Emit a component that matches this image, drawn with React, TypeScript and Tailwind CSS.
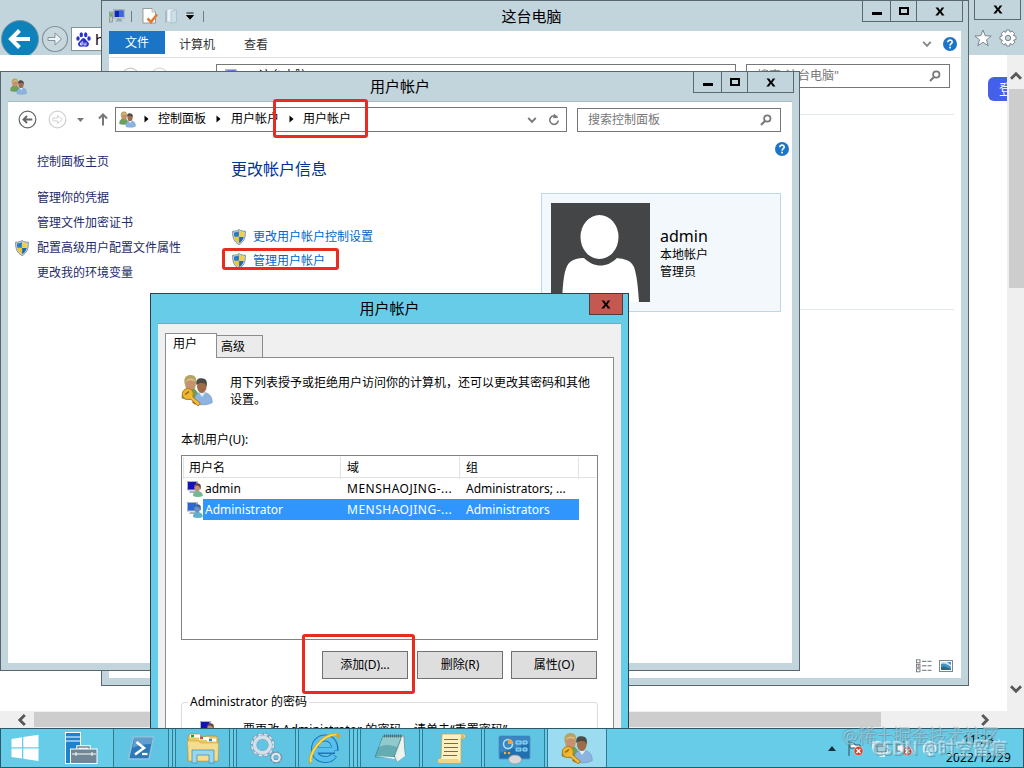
import type { ReactNode } from 'react';
import clsx from 'clsx';

function BlackX({ className = 'text-black' }: { className?: string }) {
  return (
    <svg width="10" height="9" viewBox="0 0 10 9" className={className}>
      <path d="M0.5 0.5H3.2L5 3.2L6.800 0.5H9.300L6.300 4.400L9.500 8.500H6.800L5 5.700L3 8.500H0.300L3.600 4.400Z" fill="currentColor" />
    </svg>
  );
}

function WindowControls() {
  return (
    <div className="flex h-[22px] border border-[#5b696e]">
      <div className="flex w-[28px] items-end justify-center border-r border-[#5b696e] pb-[6px]">
        <div className="h-[3px] w-[10px] bg-black" />
      </div>
      <div className="flex w-[26px] items-center justify-center border-r border-[#5b696e]">
        <div className="h-[8px] w-[10px] border-2 border-black" />
      </div>
      <div className="flex w-[45px] items-center justify-center">
        <BlackX />
      </div>
    </div>
  );
}

function HelpIcon() {
  return (
    <svg width="14" height="14" viewBox="0 0 14 14" className="shrink-0">
      <circle cx="7" cy="7" r="7" fill="#1b75c8" />
      <path d="M4.8 5.2C4.8 2.3 9.4 2.5 9.2 5.1C9.1 6.6 7.1 6.7 7 8.6" fill="none" stroke="#fff" strokeWidth="1.6" />
      <rect x="6.2" y="9.7" width="1.7" height="1.7" fill="#fff" />
    </svg>
  );
}

function SearchIcon() {
  return (
    <svg width="12" height="12" viewBox="0 0 12 12" className="shrink-0">
      <circle cx="7.3" cy="4.5" r="3.2" fill="none" stroke="#777" strokeWidth="1.7" />
      <path d="M5 7L1 11" stroke="#777" strokeWidth="2" />
    </svg>
  );
}

function Chevron({ className, size = 10 }: { className?: string; size?: number }) {
  return (
    <svg width={size} height={size} viewBox="0 0 10 10" className={clsx('shrink-0', className)}>
      <path d="M1.2 2.8L5 6.8L8.8 2.8" fill="none" stroke="currentColor" strokeWidth="1.9" />
    </svg>
  );
}

function ScrollArrow({ className }: { className?: string }) {
  return (
    <svg width="12" height="12" viewBox="0 0 12 12" className={clsx('shrink-0 text-[#58585a]', className)}>
      <path d="M1 3.2L6 8.2L11 3.2" fill="none" stroke="currentColor" strokeWidth="2.8" />
    </svg>
  );
}

function Shield() {
  return (
    <svg width="14" height="16" viewBox="0 0 14 16" className="shrink-0">
      <path d="M7 0.5C8.5 1.8 11 2.3 13.4 2.2C13.6 8.5 12 13 7 15.6C2 13 0.4 8.5 0.6 2.2C3 2.3 5.5 1.8 7 0.5Z" fill="#cdd4d9" stroke="#7f878d" strokeWidth="0.9" />
      <path d="M6.9 2C5.5 3 4 3.4 2 3.5C1.9 5 2 6.4 2.3 7.7H6.9Z" fill="#2a7bc5" />
      <path d="M7.1 2C8.5 3 10 3.4 12 3.5C12.1 5 12 6.4 11.7 7.7H7.1Z" fill="#f3d040" />
      <path d="M6.9 14C4.4 12.6 2.9 10.5 2.3 7.9H6.9Z" fill="#efc52c" />
      <path d="M7.1 14C9.6 12.6 11.1 10.5 11.7 7.9H7.1Z" fill="#1b68b3" />
    </svg>
  );
}

function UsersIcon({ size, withKey = false }: { size: number; withKey?: boolean }) {
  return (
    <svg width={size} height={size} viewBox="0 0 32 32" className="shrink-0">
      <path d="M1 24C1 17 4 14.500 9 14.500C14 14.500 17 17 17 23C13 26 5 26 1 24Z" fill="#6ca159" stroke="#4e7f41" strokeWidth="0.6" />
      <path d="M3.500 9C2.500 3 6 1 9.500 1C14 1 16 4 15 10L14 15H5Z" fill="#b5a564" />
      <ellipse cx="9.700" cy="9.800" rx="4.300" ry="6" fill="#c98f70" />
      <path d="M5 8C6 3.500 13 3 14.500 8C12 5.500 8 5.500 5 8Z" fill="#d8c682" />
      <path d="M13 29C13 21 16 18.500 21.500 18.500C28 18.500 31 22 31.300 28.500C27 31.500 17 31.500 13 29Z" fill="#8db4e0" stroke="#6790bd" strokeWidth="0.6" />
      <path d="M18 18.500L21 23L24.500 18.500Z" fill="#e5eff9" />
      <ellipse cx="20.800" cy="12.500" rx="4.800" ry="6.500" fill="#a06b48" />
      <path d="M15.500 11C14 4.500 19 3.500 22 4.500C26 5 26.500 9 25.500 12.500L24 9.500C21 8.500 18 8.500 15.500 11Z" fill="#4b4a43" />
      {withKey && (
        <g>
          <path d="M8.500 22L18.500 31M14 27.500L12.500 29.500" stroke="#a96d13" strokeWidth="3.800" />
          <circle cx="6.800" cy="20" r="5.500" fill="#f0b52e" stroke="#ad7417" strokeWidth="0.800" />
          <path d="M8.500 22L18 30.500" stroke="#f5bd3c" strokeWidth="2.400" />
          <path d="M4.200 20.500L8 17.500" stroke="#8a6317" strokeWidth="1.500" />
        </g>
      )}
    </svg>
  );
}

function UserPcIcon({ selected = false }: { selected?: boolean }) {
  return (
    <svg width="16" height="16" viewBox="0 0 16 16" className="shrink-0">
      <rect x="0.5" y="0.5" width="10" height="8.500" fill="#d9dfe6" stroke="#8f9dab" strokeWidth="0.7" />
      <rect x="1" y="1" width="8.500" height="7.500" fill={selected ? '#2a68d8' : '#1410c0'} />
      <path d="M3 10H9L10 12H2Z" fill="#a7b6c2" />
      <path d="M6 15C6 11.500 8 10 10.500 10C14 10 15.800 12.500 15.800 15C13 16.200 9 16.200 6 15Z" fill={selected ? '#5fb0cc' : '#72b892'} />
      <ellipse cx="10.200" cy="6.600" rx="2.900" ry="3.900" fill={selected ? '#6d91bd' : '#c49178'} />
      <path d="M7 5.500C7 1.500 13.800 1 13.800 5V9L12.300 5.500C10.500 4.300 8.500 4 7 5.500Z" fill={selected ? '#3a65a0' : '#65463a'} />
    </svg>
  );
}

function ComputerIcon() {
  return (
    <svg width="16" height="14" viewBox="0 0 16 14" className="shrink-0">
      <rect x="0.5" y="3" width="3" height="10" fill="#bec7c1" stroke="#788178" strokeWidth="0.6" />
      <rect x="1.300" y="4.200" width="1.500" height="3.500" fill="#58a248" />
      <rect x="4.500" y="0.500" width="11" height="8.500" fill="#dae1e8" stroke="#8d9aa6" strokeWidth="0.6" />
      <rect x="5.500" y="1.500" width="9" height="6.500" fill="#1323b5" />
      <path d="M10 8V1.500H14.500V8Z" fill="#3869d8" />
      <path d="M8.500 9.500H12L13.500 12.500H6.500Z" fill="#99a8b6" />
    </svg>
  );
}

function CircleArrow({ size, color, back = false }: { size: number; color: string; back?: boolean }) {
  return (
    <svg width={size} height={size} viewBox="0 0 20 20" fill="none" stroke={color} className={clsx('shrink-0', back && '-scale-x-100')}>
      <circle cx="10" cy="10" r="8.800" strokeWidth="1.300" />
      {back ? (
        <path d="M5 10H14M10.500 6.300L14.200 10L10.500 13.700" strokeWidth="2" />
      ) : (
        <path d="M5.200 8.500H10V5.800L15 10L10 14.200V11.500H5.200Z" strokeWidth="1" />
      )}
    </svg>
  );
}

function Caret() {
  return (
    <svg width="5" height="8" viewBox="0 0 5 8" className="shrink-0">
      <path d="M0.500 0.500L4.500 4L0.500 7.500Z" fill="#000" />
    </svg>
  );
}

// The browser at the very back of the desktop
function BrowserWindow() {
  return (
    <div className="absolute inset-x-0 top-0 flex h-[728px] flex-col bg-white">
      <div className="flex h-[55px] shrink-0 justify-between overflow-hidden bg-[#c2d4dc]">
        <div className="flex pt-5 pl-[1px]">
          <svg width="38" height="38" viewBox="0 0 38 38">
            <circle cx="19" cy="19" r="18.500" fill="#0d81b9" stroke="#78939e" />
            <path d="M29 19H11M18.500 10.500L10 19L18.500 27.500" fill="none" stroke="#fff" strokeWidth="4" />
          </svg>
          <div className="mt-[5px] ml-[2px]">
            <svg width="28" height="28" viewBox="0 0 28 28" fill="none" stroke="#849299">
              <circle cx="14" cy="14" r="12.500" fill="#c8d7dd" strokeWidth="1.200" />
              <path d="M7 12.500H14V8L20.500 14L14 20V15.500H7Z" fill="#edf3f5" />
            </svg>
          </div>
          <div className="mt-[7px] ml-[2px] flex h-6 w-[300px] items-center border border-[#859298] bg-white pl-1">
            <svg width="15" height="15" viewBox="0 0 15 15" fill="#2932cf">
              <ellipse cx="5.300" cy="2.700" rx="1.700" ry="2.500" />
              <ellipse cx="9.700" cy="2.700" rx="1.700" ry="2.500" />
              <ellipse cx="2" cy="6.500" rx="1.700" ry="2.200" />
              <ellipse cx="13" cy="6.500" rx="1.700" ry="2.200" />
              <path d="M7.500 6C9.500 6 10 8.500 12 10C14 12 12.500 15 10 14.700C8 14.300 7 14.300 5 14.700C2.500 15 1 12 3 10C5 8.500 5.500 6 7.500 6Z" />
              <path d="M6.200 9V13H4.500V11H6M8 10.500V13H10V10.500" stroke="#fff" strokeWidth="0.800" fill="none" />
            </svg>
            <span className="ml-[4px] text-[15px]">http</span>
          </div>
        </div>
        <div className="flex flex-col items-end pr-[3px]">
          <div className="flex h-5 w-[47px] items-center justify-center border border-t-0 border-[#5b696e]">
            <BlackX />
          </div>
          <div className="mt-[9px] mr-[4px] flex gap-[7px]">
            <svg width="18" height="18" viewBox="0 0 18 18">
              <path d="M9 1L11.200 6.700L17.200 7L12.500 10.800L14.200 16.700L9 13.300L3.800 16.700L5.500 10.800L0.800 7L6.800 6.700Z" fill="#fff" stroke="#78868d" />
            </svg>
            <svg width="18" height="18" viewBox="0 0 18 18">
              <path d="M7.500 1H10.500L11 3.200L13 2L15.600 4.500L14.300 6.500L17 7.300V10.500L14.500 11.200L15.800 13.200L13.300 15.800L11.200 14.500L10.500 17H7.500L6.800 14.600L4.700 15.800L2.200 13.300L3.500 11.200L1 10.500V7.500L3.400 6.800L2.200 4.700L4.700 2.200L6.800 3.400Z" fill="#fff" stroke="#78868d" />
              <circle cx="9" cy="9" r="2.700" fill="#c2d4dc" stroke="#78868d" />
            </svg>
          </div>
        </div>
      </div>
      <div className="flex min-h-0 flex-1">
        <div className="flex flex-1 justify-end overflow-hidden pt-[22px]">
          <div className="h-6 w-[19px] overflow-hidden rounded-l-md bg-[#4361e8] pl-[11px] text-[14px] leading-6 whitespace-nowrap text-white">登录</div>
        </div>
        <div className="flex w-[17px] flex-col items-center bg-[#efefef]">
          <div className="flex h-[34px] items-center pt-2">
            <ScrollArrow className="rotate-180" />
          </div>
          <div className="h-[199px] w-[15px] self-end bg-[#cdcdcd]" />
          <ScrollArrow className="mt-auto mb-4" />
        </div>
      </div>
      <div className="flex h-[17px] shrink-0 items-center bg-[#efefef]">
        <div className="flex w-[34px] justify-center pl-[10px]">
          <ScrollArrow className="rotate-90" />
        </div>
        <div className="h-[15px] w-[847px] bg-[#cdcdcd]" />
        <ScrollArrow className="ml-[98px] -rotate-90" />
      </div>
    </div>
  );
}

function ComputerWindow() {
  return (
    <div className="absolute top-0 left-[101px] flex h-[686px] w-[868px] flex-col border border-[#59676c] bg-[#c2d4dc] px-[7px] pb-[7px]">
      <div className="relative flex h-[30px] shrink-0 items-center justify-center">
        <div className="absolute top-[7px] left-0 flex items-center">
          <ComputerIcon />
          <div className="ml-[6px] h-[11px] w-px bg-[#737e83]" />
          <svg width="16" height="16" viewBox="0 0 16 16" className="ml-[10px]">
            <path d="M1 0.500H10L13.500 4V15H1Z" fill="#fff" stroke="#868686" strokeWidth="0.800" />
            <path d="M10 0.500V4H13.500" fill="#dce5ed" stroke="#999" strokeWidth="0.600" />
            <path d="M5.500 10.500L9 14L15 6.500" fill="none" stroke="#e47839" strokeWidth="2.600" />
          </svg>
          <svg width="14" height="16" viewBox="0 0 14 16" className="ml-[6px]">
            <path d="M1 3L5 1V13L1 15Z" fill="#9ebcc9" />
            <path d="M3 1H10V14H3Z" fill="#ebf1f4" stroke="#afc2cd" strokeWidth="0.600" />
            <path d="M7 3L12.500 2V14L7 15.500Z" fill="#ccdfe8" stroke="#9bb6c4" strokeWidth="0.600" />
          </svg>
          <svg width="8" height="8" viewBox="0 0 8 8" className="ml-[8px]">
            <path d="M0.500 1H7.500M0.500 3.500H7.500L4 7.200Z" fill="#000" stroke="#000" strokeWidth="0.900" />
          </svg>
          <div className="ml-[9px] h-[11px] w-px bg-[#737e83]" />
        </div>
        <span className="pr-[7px] text-[15px]">这台电脑</span>
        <div className="absolute -top-px -right-[2px]">
          <WindowControls />
        </div>
      </div>
      <div className="flex min-h-0 flex-1 flex-col bg-white">
        <div className="flex h-[27px] shrink-0 border-b border-[#dce2e5] text-xs text-[#333]">
          <div className="flex h-[23px] w-14 items-center justify-center bg-[#1b75c6] text-white">文件</div>
          <div className="ml-[14px] flex items-center pt-[2px]">计算机</div>
          <div className="ml-[29px] flex items-center pt-[2px]">查看</div>
          <div className="ml-auto flex items-center gap-[11px] pr-[4px] text-[#888]">
            <Chevron />
            <HelpIcon />
          </div>
        </div>
        <div className="mt-[6px] flex h-6 shrink-0 items-center pl-3 text-xs">
          <CircleArrow size={19} color="#c8c8c8" back />
          <div className="ml-[10px]">
            <CircleArrow size={19} color="#d8d8d8" />
          </div>
          <div className="ml-auto flex h-[25px] w-[520px] items-center border border-[#777] pl-1">
            <ComputerIcon />
            <span className="ml-[22px]">这台电脑</span>
          </div>
          <div className="mr-[11px] ml-[10px] flex h-6 w-[204px] items-center justify-between border border-[#777] pr-2 pl-[10px] text-[#777]">
            搜索"这台电脑"
            <SearchIcon />
          </div>
        </div>
        <div className="mx-[7px] mt-[26px] h-px shrink-0 bg-[#e2e9ed]" />
        <div className="mx-[7px] mt-[194px] h-px shrink-0 bg-[#e2e9ed]" />
        <div className="mt-auto flex items-center justify-end gap-[7px] pr-[8px] pb-[5px]">
          <svg width="16" height="14" viewBox="0 0 16 14">
            <g fill="#fff" stroke="#6e7478" strokeWidth="0.900">
              <rect x="0.500" y="0.800" width="3.500" height="3" />
              <rect x="0.500" y="5.300" width="3.500" height="3" />
              <rect x="0.500" y="9.800" width="3.500" height="3" />
            </g>
            <path d="M6 2.300H10.500M11.500 2.300H15.500M6 6.800H10.500M11.500 6.800H15.500M6 11.300H10.500M11.500 11.300H15.500" stroke="#686e72" />
            <rect x="1.800" y="6.200" width="1" height="1.200" fill="#c23434" />
          </svg>
          <svg width="14" height="12" viewBox="0 0 14 12">
            <rect x="0.500" y="0.500" width="13" height="11" fill="#fff" stroke="#7e858a" />
            <rect x="2" y="2" width="10" height="8" fill="#3e91c9" />
            <path d="M2 4Q6 2 12 7V5L8 2H2Z" fill="#cce5f3" />
            <path d="M2 7Q6 5 12 10H2Z" fill="#306a78" />
          </svg>
        </div>
      </div>
    </div>
  );
}

function AccountsWindow() {
  return (
    <div className="absolute top-[71px] left-0 flex h-[600px] w-[800px] flex-col border border-[#59676c] bg-[#c2d4dc] px-[7px] pb-[7px]">
      <div className="relative flex h-[29px] shrink-0 items-center justify-center">
        <div className="absolute top-[6px] left-[2px]">
          <UsersIcon size={17} />
        </div>
        <span className="text-[15px]">用户帐户</span>
        <div className="absolute -top-px -right-[2px]">
          <WindowControls />
        </div>
      </div>
      <div className="flex min-h-0 flex-1 flex-col border-t border-[#abbac0] bg-white">
        <div className="mt-[5px] flex h-[25px] shrink-0 items-center pl-[10px] text-xs">
          <CircleArrow size={19} color="#666" back />
          <div className="ml-[11px]">
            <CircleArrow size={19} color="#d0d0d0" />
          </div>
          <svg width="7" height="4" viewBox="0 0 7 4" className="ml-[10px]">
            <path d="M0 0H7L3.500 4Z" fill="#777" />
          </svg>
          <svg width="10" height="13" viewBox="0 0 10 13" className="ml-[14px]">
            <path d="M5 12.500V2M1 5.500L5 1.500L9 5.500" fill="none" stroke="#777" strokeWidth="2" />
          </svg>
          <div className="ml-[7px] flex h-[25px] w-[452px] items-center border border-[#777] pl-[3px]">
            <UsersIcon size={17} />
            <div className="ml-2 flex items-center gap-[10px] pb-[1px]">
              <Caret />
              <span className="-ml-[1px]">控制面板</span>
              <Caret />
              <span>用户帐户</span>
              <Caret />
              <span className="-ml-[1px]">用户帐户</span>
            </div>
            <Chevron className="ml-auto text-[#777]" />
            <svg width="12" height="13" viewBox="0 0 12 13" className="mr-[6px] ml-[11px]">
              <path d="M9.500 4.500A4.300 4.300 0 1 0 10.300 7.500" fill="none" stroke="#777" strokeWidth="1.600" />
              <path d="M6 0.500L9.800 4.800L5.200 5.200Z" fill="#777" />
            </svg>
          </div>
          <div className="mt-px ml-[10px] flex h-6 w-[204px] items-center justify-between border border-[#777] pr-2 pl-[10px] text-[#777]">
            搜索控制面板
            <SearchIcon />
          </div>
        </div>
        <div className="flex">
          <div className="flex w-[223px] flex-col pt-[21px] text-xs leading-[18px] text-[#1d2c6b]">
            <div className="pl-[29px]">控制面板主页</div>
            <div className="mt-[18px] flex flex-col gap-[7px]">
              <div className="pl-[29px]">管理你的凭据</div>
              <div className="pl-[29px]">管理文件加密证书</div>
              <div className="flex items-center gap-2 pl-[7px]">
                <Shield />
                配置高级用户配置文件属性
              </div>
              <div className="pl-[29px]">更改我的环境变量</div>
            </div>
          </div>
          <div className="flex w-[310px] flex-col pt-[25px]">
            <div className="text-base leading-6 text-[#003399]">更改帐户信息</div>
            <div className="mt-[46px] flex flex-col gap-[5px] pl-[1px] text-xs leading-[19px] text-[#0066cc]">
              <div className="flex items-center gap-[7px]">
                <Shield />
                更改用户帐户控制设置
              </div>
              <div className="flex items-center gap-[7px]">
                <Shield />
                管理用户帐户
              </div>
            </div>
          </div>
          <div className="flex flex-1 flex-col">
            <div className="mt-[10px] mr-[3px] self-end">
              <HelpIcon />
            </div>
            <div className="mt-[37px] flex h-[119px] w-[240px] border border-[#bfd6ef] bg-[#f2f8fc] pt-[9px] pl-[9px]">
              <svg width="99" height="99" viewBox="0 0 99 99">
                <rect width="99" height="99" fill="#444546" />
                <ellipse cx="48.500" cy="34" rx="19" ry="22" fill="#fff" />
                <path d="M11 99C12 78 13 66 18 60C22 56 28 55 33 55C43 65 56 65 66 55C73 56 80 57 83 64C86 73 87 84 88 99Z" fill="#fff" />
              </svg>
              <div className="ml-[10px] pt-[23px] text-xs leading-[17px]">
                <div className="text-base leading-[20px]">admin</div>
                <div>本地帐户</div>
                <div>管理员</div>
              </div>
            </div>
          </div>
        </div>
      </div>
    </div>
  );
}

const users = [
  { name: 'admin', domain: 'MENSHAOJING-...', group: 'Administrators; ...' },
  { name: 'Administrator', domain: 'MENSHAOJING-...', group: 'Administrators', selected: true },
];

function DialogButton({ children, className }: { children: ReactNode; className?: string }) {
  return (
    <div className={clsx('flex h-7 w-[86px] items-center justify-center border border-[#707070] bg-[#dedede]', className)}>{children}</div>
  );
}

function AccountsDialog() {
  return (
    <div className="absolute top-[293px] left-[150px] flex h-[435px] w-[479px] flex-col overflow-hidden border border-b-0 border-[#27434e] bg-[#66cce8] px-[7px] text-xs">
      <div className="relative flex h-[29px] shrink-0 items-center justify-center">
        <span className="pb-[2px] text-[15px]">用户帐户</span>
        <div className="absolute -top-px -right-[2px] flex h-[22px] w-[34px] items-center justify-center border border-[#553c3d] bg-[#c55850]">
          <BlackX />
        </div>
      </div>
      <div className="flex min-h-0 flex-1 flex-col border-t border-[#7aa7b9] bg-[#f0f0f0] px-[7px] pt-[9px]">
        <div className="z-10 flex h-6 shrink-0 items-end">
          <div className="-mb-px h-[25px] w-[52px] border border-b-0 border-[#8c8c8c] bg-white pt-[1px] pl-[7px] leading-[18px]">用户</div>
          <div className="h-[22px] w-[46px] border border-b-0 border-l-0 border-[#8c8c8c] bg-[#ebebeb] pt-[2px] pl-[4px] leading-[18px]">高级</div>
        </div>
        <div className="h-[500px] w-[449px] shrink-0 border border-[#8c8c8c] bg-white px-[15px]">
          <div className="flex pt-4">
            <UsersIcon size={32} withKey />
            <div className="ml-[17px] w-[364px] leading-[17px]">用下列表授予或拒绝用户访问你的计算机，还可以更改其密码和其他设置。</div>
          </div>
          <div className="mt-[23px] leading-[18px]">本机用户(U):</div>
          <div className="mt-[6px] h-[185px] w-[417px] border border-[#828282] p-[1px]">
            <div className="grid h-[21px] grid-cols-[158px_119px_119px_1fr] border-b border-[#e2e2e2] leading-[22px]">
              <div className="border-r border-l border-[#e2e2e2] pl-[5px]">用户名</div>
              <div className="border-r border-[#e2e2e2] pl-[6px]">域</div>
              <div className="border-r border-[#e2e2e2] pl-[6px]">组</div>
            </div>
            {users.map((user) => (
              <div key={user.name} className="flex h-[21px] items-center pl-[4px]">
                <UserPcIcon selected={user.selected} />
                <div className={clsx('grid h-[21px] w-[376px] grid-cols-[142px_119px_1fr] pl-[2px] leading-[22px]', user.selected && 'bg-[#3096fe] text-white')}>
                  <span>{user.name}</span>
                  <span className="tracking-[0.5px]">{user.domain}</span>
                  <span>{user.group}</span>
                </div>
              </div>
            ))}
          </div>
          <div className="mt-[11px] flex justify-end gap-[8px] pr-[1px]">
            <DialogButton className="mr-px">添加(D)...</DialogButton>
            <DialogButton>删除(R)</DialogButton>
            <DialogButton>属性(O)</DialogButton>
          </div>
          <fieldset className="mt-[14px] h-[100px] w-[417px] rounded-[3px] border border-[#d9dde0] pl-[6px]">
            <legend className="px-[2px] leading-[18px]">Administrator 的密码</legend>
            <div className="flex pt-[10px] pl-[12px]">
              <UserPcIcon />
              <span className="ml-[27px] leading-[18px] tracking-[0.12px]">要更改 Administrator 的密码，请单击“重置密码”。</span>
            </div>
          </fieldset>
        </div>
      </div>
    </div>
  );
}

function TaskButton({ children, className, active = false }: { children: ReactNode; className: string; active?: boolean }) {
  return (
    <div className={clsx('flex shrink-0 items-center justify-center border-r border-l border-[#337b92]', active ? 'bg-[#9bdcf0]' : 'bg-[#60c5e2]', className)}>
      {children}
    </div>
  );
}

function StackEdge() {
  return <div className="ml-[3px] w-px bg-[#337b92]" />;
}

function ErrorBadge() {
  return (
    <g>
      <circle cx="11.500" cy="11" r="4.500" fill="#dc3c2a" stroke="#f3cdc6" strokeWidth="0.600" />
      <path d="M9.500 9L13.500 13M13.500 9L9.500 13" stroke="#fff" strokeWidth="1.500" />
    </g>
  );
}

function Taskbar() {
  return (
    <div className="absolute inset-x-0 bottom-0 flex h-10 border border-[#2c5966] bg-[#66cce8]">
      <div className="flex w-[112px] shrink-0 items-center pl-[10px]">
        <svg width="28" height="28" viewBox="0 0 28 28" fill="#fff">
          <path d="M0.500 5L11 3.300V13.300H0.500ZM12.300 3L27.500 0.800V13.300H12.300ZM0.500 14.600H11V24.500L0.500 23ZM12.300 14.600H27.500V27L12.300 24.800Z" />
        </svg>
        <svg width="33" height="32" viewBox="0 0 33 32" className="ml-[26px]">
          <rect x="0.500" y="0.500" width="15" height="31" fill="#1e83ce" stroke="#fff" />
          <path d="M0.500 5H15.500M0.500 9H15.500" stroke="#fff" />
          <path d="M13 18V15H24V18" fill="none" stroke="#fff" strokeWidth="3.500" />
          <path d="M13 18V15H24V18" fill="none" stroke="#70858f" strokeWidth="1.500" />
          <rect x="5.500" y="17" width="26.500" height="14.500" fill="#6f8796" stroke="#fff" />
          <path d="M7 22H31M11 20V24M27 20V24" stroke="#fff" />
        </svg>
      </div>
      <TaskButton className="w-[56px]">
        <svg width="28" height="24" viewBox="0 0 27 24">
          <path d="M6 1H26L21.500 23H1Z" fill="#2d79b8" stroke="#92c4df" strokeWidth="1.400" />
          <path d="M6.800 2H25L24 8Q12 8 5 12Z" fill="#639dcc" />
          <path d="M9 6L16.500 12L7.500 18.500" fill="none" stroke="#fff" strokeWidth="2.600" />
          <path d="M14.500 18H20" stroke="#fff" strokeWidth="2.200" />
        </svg>
      </TaskButton>
      <StackEdge />
      <TaskButton className="ml-[2px] w-[55px]">
        <svg width="34" height="32" viewBox="0 0 34 32">
          <path d="M2 4L4 2H13L15 5H19L20 4H30L32 6V29H2Z" fill="#e8c669" stroke="#a88c43" strokeWidth="0.700" />
          <path d="M4 4H14M13 6.500H23M21 8H30" stroke="#fff" strokeWidth="3" />
          <path d="M5 4H8" stroke="#1c9f41" strokeWidth="2.500" />
          <path d="M14 6H17" stroke="#d35331" strokeWidth="2.500" />
          <path d="M23 8H26" stroke="#3a84ca" strokeWidth="2.500" />
          <path d="M1.500 9H12L15 11H32.500L32 29H2.500Z" fill="#f4dd8c" stroke="#c2a251" strokeWidth="0.600" />
          <path d="M6 31V18H28V31H23V23H11V31Z" fill="#96d8f1" stroke="#4793b8" strokeWidth="0.800" />
        </svg>
      </TaskButton>
      <StackEdge />
      <TaskButton className="ml-[2px] w-[60px]">
        <svg width="33" height="31" viewBox="0 0 33 31">
          <circle cx="12.500" cy="12" r="10.500" fill="none" stroke="#7e93a6" strokeWidth="3.600" strokeDasharray="3.600 1.900" />
          <circle cx="12.500" cy="12" r="10.300" fill="none" stroke="#dbe6ef" strokeWidth="2.600" strokeDasharray="3.200 2.300" />
          <circle cx="12.500" cy="12" r="7.800" fill="none" stroke="#8299ae" strokeWidth="4.600" />
          <circle cx="12.500" cy="12" r="7.900" fill="none" stroke="#d3e0ec" strokeWidth="3.600" />
          <circle cx="26" cy="24.500" r="5" fill="none" stroke="#7e93a6" strokeWidth="2.800" strokeDasharray="2.300 1.620" />
          <circle cx="26" cy="24.500" r="3.700" fill="none" stroke="#7089a0" strokeWidth="3.200" />
          <circle cx="26" cy="24.500" r="3.700" fill="none" stroke="#dce7ef" strokeWidth="2.300" />
        </svg>
      </TaskButton>
      <TaskButton className="ml-[2px] w-[52px]">
        <svg width="32" height="32" viewBox="0 0 32 32" fill="none">
          <path d="M27 18.500H8.500M27 18.500C27.500 10 22.500 6 17 6C11 6 6.500 11 6.500 17C6.500 23.500 11 27.500 17.500 27.500C21.500 27.500 24.500 25.500 26 23" stroke="#1f74b5" strokeWidth="7" />
          <path d="M26.500 18H8.500M26.500 18C27 10 22.500 6 17 6C11 6 6.500 11 6.500 17C6.500 23.500 11 27.500 17.500 27.500C21.500 27.500 24.500 25.500 26 23.500" stroke="#58c0ee" strokeWidth="5" />
          <path d="M3 31C-1 25 13 1 29 2.500Q31 3 30 6" stroke="#dfa515" strokeWidth="3" />
          <path d="M3 30C0 24 13 2 28.500 2.500" stroke="#ffe05a" strokeWidth="1.600" />
        </svg>
      </TaskButton>
      <StackEdge />
      <StackEdge />
      <TaskButton className="ml-[2px] w-[60px]">
        <svg width="32" height="30" viewBox="0 0 32 30">
          <path d="M11 3H30L31 22L23 29Z" fill="#e8edeb" stroke="#6c837f" strokeWidth="0.700" />
          <path d="M9 3H28L20 24H1Z" fill="#64acb2" stroke="#377f89" strokeWidth="0.700" />
          <path d="M9 4H27L23 14Q12 10 5 14Z" fill="#92c9cc" />
          <path d="M1 23L20 24L23 29L28 3L31 23L23 29L21 26Z" fill="#eef3ee" />
          <path d="M10 3H28" stroke="#596b6c" strokeWidth="2.800" strokeDasharray="1 1" />
        </svg>
      </TaskButton>
      <TaskButton className="ml-[2px] w-[60px]">
        <svg width="30" height="31" viewBox="0 0 30 31">
          <path d="M5 1H27Q30 4 26 6L24 5V29L2 30Q-1 27 4 25Z" fill="#fff0bd" stroke="#bda75f" strokeWidth="0.800" />
          <path d="M1 26H21L24 30H2Z" fill="#efd58b" />
          <path d="M24 1Q28 1 27 6H24Z" fill="#d8bb6c" />
          <path d="M7 6.500H21M7 10.500H21M7 14.500H21M7 18.500H21M6 22.500H20" stroke="#746b50" />
        </svg>
      </TaskButton>
      <TaskButton className="ml-[2px] w-[61px]">
        <svg width="34" height="30" viewBox="0 0 34 30" className="mt-1">
          <rect x="1" y="1" width="31" height="23" rx="1" fill="#216faf" stroke="#5299ce" />
          <path d="M2 2H31V8L2 18Z" fill="#3a85c2" />
          <circle cx="10" cy="9" r="4.500" fill="none" stroke="#a9e4f6" strokeWidth="1.600" />
          <path d="M10 9V4A5 5 0 0 1 15 9Z" fill="#f2a23f" />
          <path d="M18 6H23V9H18ZM25 6H29V9H25ZM18 13H23V16H18ZM25 13H29V16H25Z" fill="#35a4dc" stroke="#bbedfc" strokeWidth="0.800" />
          <circle cx="7" cy="18" r="1.200" fill="#edb341" />
          <circle cx="11" cy="18" r="1.200" fill="#edb341" />
          <ellipse cx="17" cy="24.500" rx="6.500" ry="4.500" fill="#d6d8da" stroke="#8b9297" strokeWidth="0.700" />
        </svg>
      </TaskButton>
      <TaskButton className="ml-[2px] w-[60px]" active>
        <UsersIcon size={32} withKey />
      </TaskButton>
      <div className="ml-auto flex items-center pr-[11px] text-xs">
        <svg width="8" height="5" viewBox="0 0 8 5">
          <path d="M0 5L4 0L8 5Z" fill="#173039" />
        </svg>
        <svg width="17" height="17" viewBox="0 0 17 17" className="ml-[11px]">
          <path d="M2 1V16M3 3H7L8 5H13V10H9L8 8H3Z" fill="#fff" stroke="#354f58" strokeWidth="1" />
          <ErrorBadge />
        </svg>
        <svg width="17" height="17" viewBox="0 0 17 17" className="ml-[8px]">
          <path d="M1 2H6V5H15V13H4V8H1ZM8 13V16H13" fill="#a3d2df" stroke="#fff" strokeWidth="1.300" />
          <path d="M5 6H14V12H5Z" fill="none" stroke="#496d78" />
        </svg>
        <svg width="17" height="17" viewBox="0 0 17 17" className="ml-[7px]">
          <path d="M1 5H4L8 1V14L4 11H1Z" fill="#f2f4f5" stroke="#445a63" strokeWidth="0.700" />
          <ErrorBadge />
        </svg>
        <svg width="15" height="15" viewBox="0 0 15 15" className="ml-[9px]">
          <path d="M7.500 0V15M2 4.500H13V10.500H2Z" fill="none" stroke="#fff" strokeWidth="1.500" />
        </svg>
        <div className="mt-[2px] ml-[8px] w-[67px] text-center leading-[18px] tracking-[0.1px]">
          <div>11:23</div>
          <div>2022/12/29</div>
        </div>
      </div>
    </div>
  );
}

// Overlapping watermarks in the bottom right corner
function Watermarks() {
  return (
    <>
      <div className="absolute top-[724px] left-[842px] text-[17.700px] leading-6 whitespace-nowrap text-[#a6d0df]/60 [text-shadow:1px_1px_0_#6090a3aa,-1px_-1px_0_#6090a355]">@稀土掘金技术社区</div>
      <div className="absolute top-[737px] left-[872px] text-[17.300px] leading-6 whitespace-nowrap text-[#9cd4e5]/60 [text-shadow:1px_1px_0_#5d8a9baa,-1px_-1px_0_#e6f4f8aa]">CSDN @时空留痕</div>
    </>
  );
}

export default function App() {
  return (
    <div className="relative h-[768px] w-[1024px] overflow-hidden bg-white font-['Noto_Sans','Noto_Sans_CJK_SC',sans-serif] text-black">
      <BrowserWindow />
      <ComputerWindow />
      <AccountsWindow />
      <AccountsDialog />
      <Taskbar />
      <div className="absolute top-[99px] left-[273px] h-[39px] w-[95px] rounded-[3px] border-3 border-[#e92b20]" />
      <div className="absolute top-[248px] left-[222px] h-[22px] w-[117px] rounded-[3px] border-3 border-[#e92b20]" />
      <div className="absolute top-[634px] left-[302px] h-[60px] w-[113px] rounded-[3px] border-3 border-[#e92b20]" />
      <Watermarks />
    </div>
  );
}
